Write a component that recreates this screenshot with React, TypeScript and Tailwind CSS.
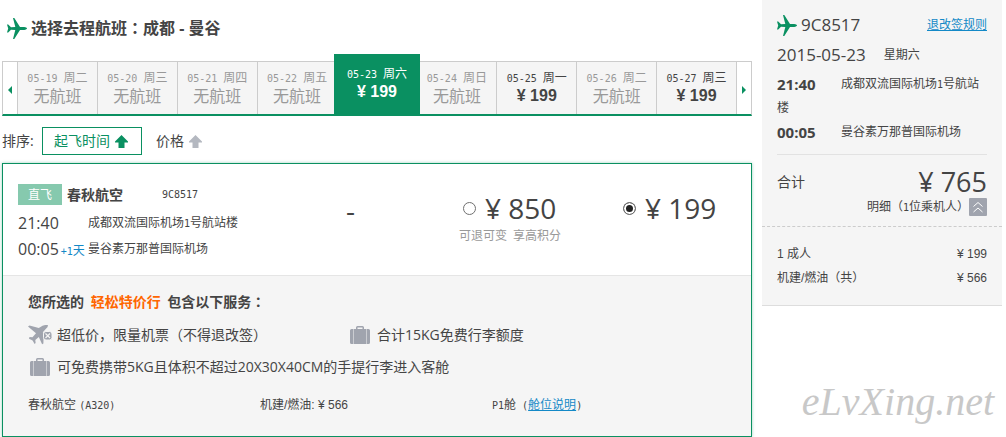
import React from "react";

const sans = "font-['Open_Sans','Noto_Sans_CJK_SC',sans-serif]";

type Day = { date: string; weekday: string; price?: number; active?: boolean };

const days: Day[] = [
  { date: "05-19", weekday: "周二" },
  { date: "05-20", weekday: "周三" },
  { date: "05-21", weekday: "周四" },
  { date: "05-22", weekday: "周五" },
  { date: "05-23", weekday: "周六", price: 199, active: true },
  { date: "05-24", weekday: "周日" },
  { date: "05-25", weekday: "周一", price: 199 },
  { date: "05-26", weekday: "周二" },
  { date: "05-27", weekday: "周三", price: 199 },
];

function Mono({ children }: { children: React.ReactNode }) {
  return <span className="font-['DejaVu_Sans_Mono',monospace] text-[10px] leading-none">{children}</span>;
}

/* Full-width punctuation centred in its cell */
function Mark({ children }: { children: React.ReactNode }) {
  return <span className="font-['Noto_Sans_CJK_TC',sans-serif] leading-none">{children}</span>;
}

function Plane() {
  return (
    <svg viewBox="0 0 20 21" className="h-[21px] w-5 shrink-0 fill-[#0a9061]" aria-hidden="true">
      <path d="M0 6.500h1.200L4 9.200l4.300-.2L6 0h1.300l5.700 8.900 4.200.2c1.600.2 2.800.8 2.800 1.400s-1.200 1.200-2.800 1.400l-4.200.2L7.300 21H6l2.300-9-4.300-.2-2.800 2.700H0l1.200-4z" />
    </svg>
  );
}

function Suitcase() {
  return (
    <svg viewBox="0 0 20 18" className="h-[18px] w-5 shrink-0 fill-[#a0a4ae]" aria-hidden="true">
      <path d="M6 3V1.500Q6 0 7.500 0h5Q14 0 14 1.500V3h-1.500V1.500h-5V3z" />
      <path d="M1.500 3H3v15H1.500Q0 18 0 16.500v-12Q0 3 1.500 3zM3.500 3h13v15h-13zM17 3h1.500Q20 3 20 4.500v12q0 1.500-1.500 1.500H17z" />
    </svg>
  );
}

function NoRefund() {
  return (
    <svg viewBox="0 0 24 20" className="h-5 w-6 shrink-0" aria-hidden="true">
      <path
        fill="#a0a4ae"
        d="M0 1.500 1.500.4l9.300 2.500L14.500.8Q18-.5 20 .2q.3 1.500-2.500 4l-2.700 3 .8 1.500-.2 9.800-1.300.8-3.300-7.300-3.500 3 .3 3-1 1-2-3.500-3.600-1.800L1.500 12l3 .2 3.500-3.900z"
      />
      <rect x="15.500" y="6.500" width="8.500" height="8.500" rx="2.500" fill="#a0a4ae" stroke="#f5f5f5" />
      <path d="m17.500 8.500 4.500 4.500m0-4.500-4.500 4.500" stroke="#f5f5f5" strokeWidth="1.200" />
    </svg>
  );
}

function UpArrow({ className }: { className: string }) {
  return (
    <svg viewBox="0 0 13 13" className={"h-[13px] w-[13px] " + className} aria-hidden="true">
      <path d="M6.500 0 13 6.500v1H9.500V13h-6V7.500H0v-1z" />
    </svg>
  );
}

function Fare({ price, note, checked }: { price: number; note?: React.ReactNode; checked?: boolean }) {
  return (
    <div className="w-40 shrink-0 pt-2.5 last:w-32">
      <label className="flex h-9 items-center gap-[9px]">
        <input
          type="radio"
          name="fare"
          defaultChecked={checked}
          className="h-[13px] w-[13px] shrink-0 appearance-none rounded-full border border-[#707070] bg-white checked:bg-[#222] checked:shadow-[inset_0_0_0_2px_#fff]"
        />
        <span className="text-[28px] leading-9 whitespace-nowrap">¥ {price}</span>
      </label>
      {note && <p className="-ml-1 pt-0.5 text-xs leading-4 whitespace-nowrap text-[#999]">{note}</p>}
    </div>
  );
}

function DayTab({ day }: { day: Day }) {
  const tone = day.active
    ? "relative z-10 -mt-2 -ml-[3px] -mr-1 bg-[#0a9061] text-white pt-3"
    : "border-l border-[#ccc] bg-[#f5f5f5] pt-2 " + (day.price ? "text-[#444]" : "text-[#999]");
  return (
    <li className="flex min-w-0">
      <button type="button" className={"flex flex-1 flex-col items-center whitespace-nowrap " + tone}>
        <span className="text-xs leading-4">
          <Mono>{day.date}&nbsp;</Mono>
          {day.weekday}
        </span>
        {day.price ? (
          <span className="font-['Liberation_Sans',sans-serif] text-base leading-5 font-bold">¥ {day.price}</span>
        ) : (
          <span className="text-base leading-5">无航班</span>
        )}
      </button>
    </li>
  );
}

function DayStrip() {
  return (
    <nav className="mt-[15px] flex h-[55px] border-x border-t border-[#ccc] border-b-2 border-b-[#0a9061]" aria-label="日期">
      <button type="button" aria-label="前一天" className="flex w-3.5 items-center justify-center">
        <svg viewBox="0 0 4 8" className="mt-1 h-2 w-1 fill-[#0a9061]"><path d="M4 0v8L0 4z" /></svg>
      </button>
      <ul className="grid min-w-0 flex-1 grid-cols-9">
        {days.map((d) => <DayTab key={d.date} day={d} />)}
      </ul>
      <button type="button" aria-label="后一天" className="flex w-[15px] items-center justify-center border-l border-[#ccc]">
        <svg viewBox="0 0 4 8" className="mt-1 h-2 w-1 fill-[#0a9061]"><path d="M0 0v8l4-4z" /></svg>
      </button>
    </nav>
  );
}

function FlightCard() {
  return (
    <article className="mt-2 border border-[#0a9061] shadow-[0_0_3px_#0a906166]">
      <div className="flex h-28 border-b border-[#e5e5e5] pl-[15px]">
        <div className="w-[313px] shrink-0 pt-5">
          <div className="flex h-[21px] items-center">
            <span className="flex h-[21px] w-11 items-center justify-center bg-[#86c9ae] text-xs text-white">直飞</span>
            <h2 className="ml-[5px] w-[95px] text-sm font-bold">春秋航空</h2>
            <Mono>9C8517</Mono>
          </div>
          <div className="mt-[5px] flex h-[26px] items-center">
            <span className="w-[70px] text-base">21:40</span>
            <span className="text-xs">成都双流国际机场<Mono>1</Mono>号航站楼</span>
          </div>
          <div className="flex h-[26px] items-center">
            <span className="w-[70px] text-base whitespace-nowrap">
              00:05<span className="ml-0.5 text-xs text-[#1389c7]"><Mono>+1</Mono>天</span>
            </span>
            <span className="text-xs">曼谷素万那普国际机场</span>
          </div>
        </div>
        <div className="min-w-0 flex-1 pt-7 pl-[15px] text-[28px] leading-9">-</div>
        <div className="flex shrink-0 pt-4">
          <Fare price={850} note={<>可退可变<Mono>&nbsp;</Mono>享高积分</>} />
          <Fare price={199} checked />
        </div>
      </div>
      <div className="bg-[#f5f5f5] px-[25px] pt-3.5 pb-[15px]">
        <h3 className="text-sm leading-6 font-bold">
          您所选的 <span className="mx-[3px] text-[#ff6600]">轻松特价行</span> 包含以下服务<Mark>：</Mark>
        </h3>
        <ul className="mt-[5px] flex flex-wrap text-sm">
          <li className="flex h-8 w-80 items-center gap-[5px]"><NoRefund />超低价，限量机票（不得退改签）</li>
          <li className="flex h-8 items-center gap-[7px] pl-0.5"><Suitcase />合计15KG免费行李额度</li>
          <li className="flex h-8 w-full items-center gap-[7px] pl-0.5"><Suitcase />可免费携带5KG且体积不超过20X30X40CM的手提行李进入客舱</li>
        </ul>
        <div className="mt-1.5 flex h-8 items-center text-xs">
          <span className="w-[232px]">春秋航空 <Mono>(A320)</Mono></span>
          <span className="w-[232px] font-['Liberation_Sans','Noto_Sans_CJK_SC',sans-serif]">机建/燃油: ¥ 566</span>
          <span>
            <Mono>P1</Mono>舱<Mono>&nbsp;(</Mono>
            <a href="#cabin" className="text-[#1389c7] underline">舱位说明</a>
            <Mono>)</Mono>
          </span>
        </div>
      </div>
    </article>
  );
}

function Summary() {
  return (
    <section className="border-b border-[#ddd] bg-[#f5f5f5]">
      <div className="px-[15px] pt-2.5">
        <div className="flex h-[30px] items-center">
          <Plane />
          <span className="ml-1 flex-1 text-[17px]">9C8517</span>
          <a href="#rules" className="text-xs text-[#1389c7] underline">退改签规则</a>
        </div>
        <div className="flex h-[30px] items-center">
          <span className="text-[17px]">2015-05-23</span>
          <span className="ml-[18px] text-xs">星期六</span>
        </div>
        <div className="pt-0.5 text-xs leading-6">
          <p>
            <strong className="inline-block h-6 w-16 align-top text-[15px] leading-6">21:40</strong>
            成都双流国际机场<Mono>1</Mono>号航站<wbr />{"楼"}
          </p>
          <p>
            <strong className="inline-block h-6 w-16 align-top text-[15px] leading-6">00:05</strong>
            曼谷素万那普国际机场
          </p>
        </div>
        <div className="mt-2.5 border-t border-[#e2e2e2] pt-[11px]">
          <div className="flex h-8 items-center justify-between">
            <span className="text-sm">合计</span>
            <span className="text-[27px] leading-8">¥ 765</span>
          </div>
          <div className="flex h-[18px] items-center justify-end">
            <span className="text-xs">明细（<Mono>1</Mono>位乘机人）</span>
            <button type="button" aria-label="收起明细" className="flex h-[18px] w-[18px] items-center justify-center rounded-[1px] bg-[#a0a4ae]">
              <svg viewBox="0 0 10 12" className="h-3 w-2.5 fill-none stroke-white"><path d="m.5 5.500 4.500-4 4.500 4m-9 5.500L5 7l4.500 4" /></svg>
            </button>
          </div>
        </div>
      </div>
      <dl className="mt-2.5 grid grid-cols-2 border-t border-dashed border-[#ccc] px-[15px] pt-[15px] pb-[15px] font-['Liberation_Sans','Noto_Sans_CJK_SC',sans-serif] text-xs leading-6">
        <dt>1 成人</dt>
        <dd className="text-right">¥ 199</dd>
        <dt>机建/燃油（共）</dt>
        <dd className="text-right">¥ 566</dd>
      </dl>
    </section>
  );
}

export default function App() {
  return (
    <div className={"flex gap-2.5 bg-white pr-1 pl-0.5 text-[#444] " + sans}>
      <main className="min-w-0 flex-1">
        <header className="flex items-center gap-1 pt-2.5 pl-[5px]">
          <Plane />
          <h1 className="text-base leading-9 font-bold">选择去程航班<Mark>：</Mark>成都 - 曼谷</h1>
        </header>
        <DayStrip />
        <div className="mt-[11px] flex h-7 items-center text-sm">
          <span className="w-10">排序:</span>
          <button type="button" className="flex h-7 items-center gap-[5px] border border-[#0a9061] pr-[13px] pl-[11px] text-[#0a9061]">
            起飞时间 <UpArrow className="fill-[#0a9061]" />
          </button>
          <button type="button" className="ml-3.5 flex items-center gap-[5px]">
            价格 <UpArrow className="fill-[#b4b8c0]" />
          </button>
        </div>
        <FlightCard />
      </main>
      <aside className="flex w-60 shrink-0 flex-col justify-between">
        <Summary />
        <p className="pr-2 pb-2 text-right font-['Liberation_Serif',serif] text-[40px] leading-[54px] text-[#c8c8c8] italic">eLvXing.net</p>
      </aside>
    </div>
  );
}
